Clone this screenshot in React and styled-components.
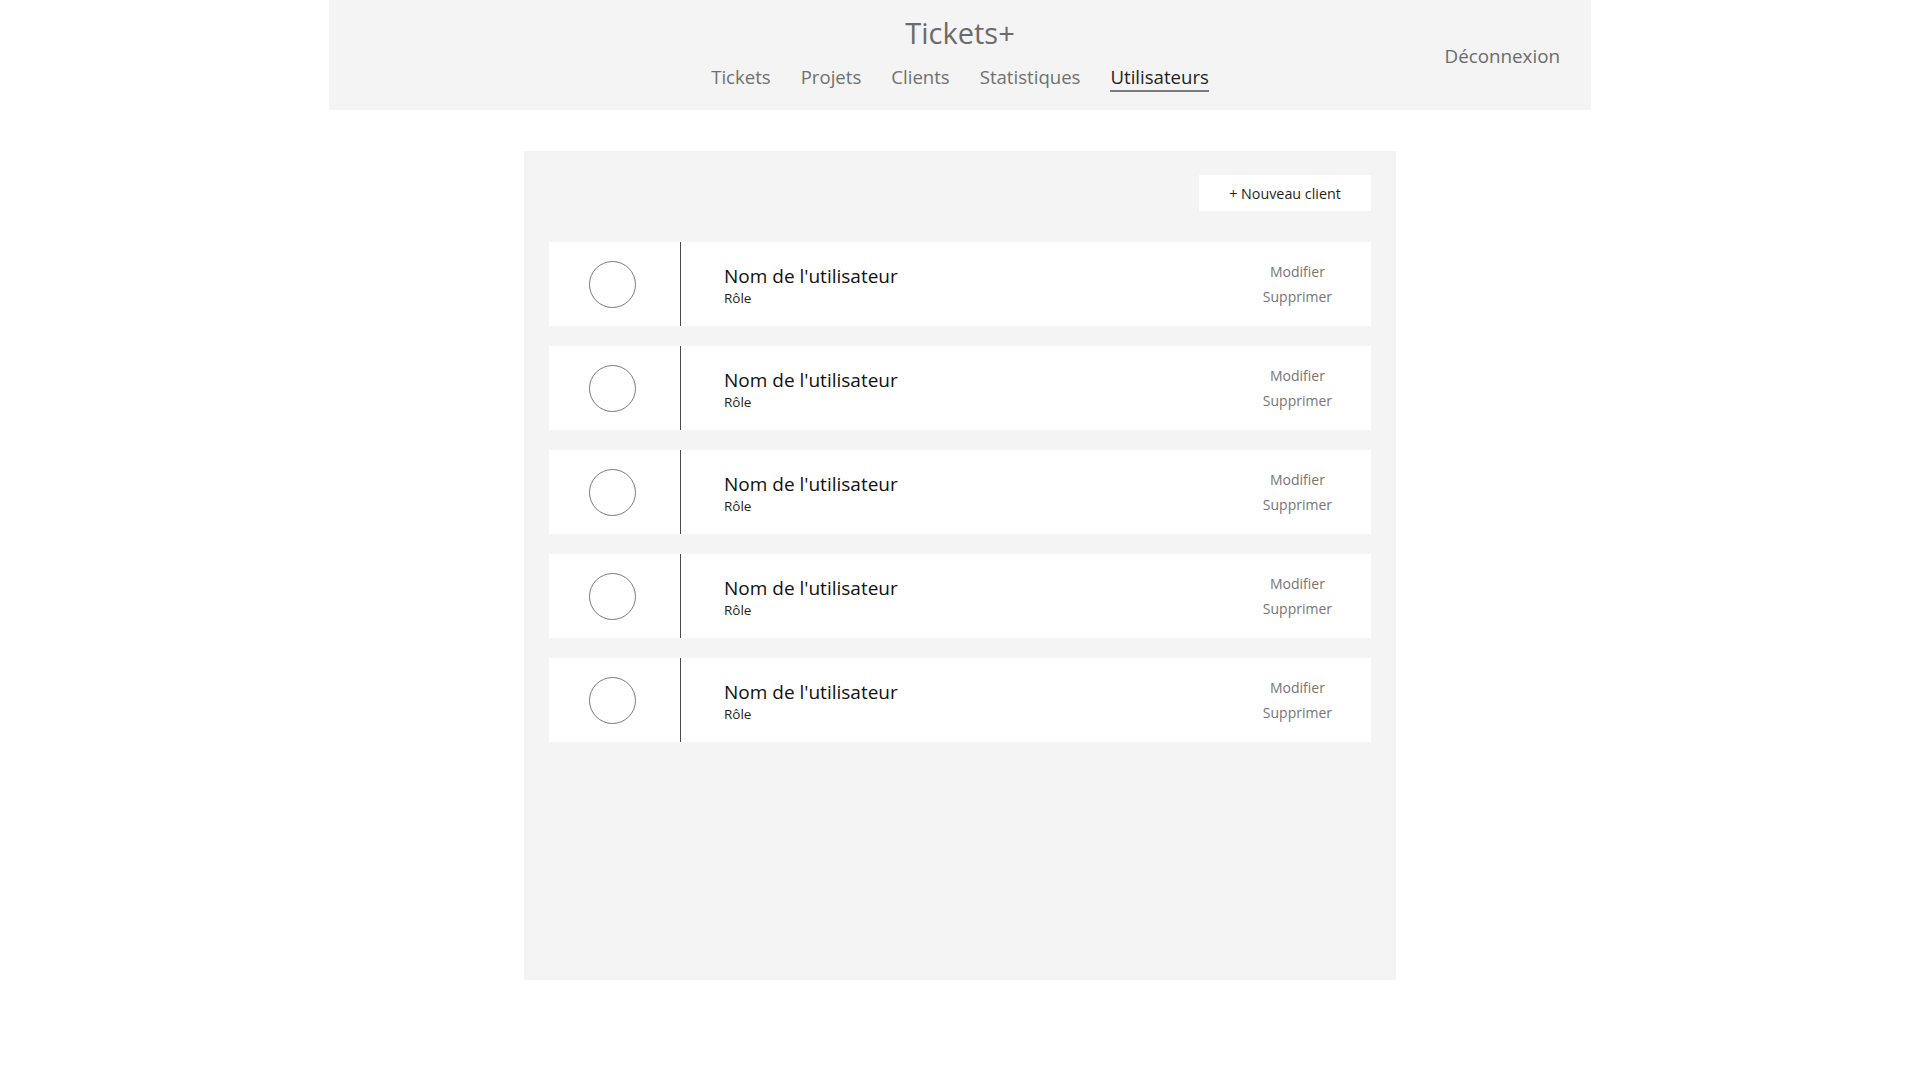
import React from 'react';
import styled, { createGlobalStyle } from 'styled-components';

const GlobalStyle = createGlobalStyle`
  body {
    margin: 0;
    background: #ffffff;
    font-family: 'Open Sans', 'Noto Sans', sans-serif;
  }
`;

// En-tête gris centré
const Header = styled.header`
  width: 1262px;
  height: 110px;
  margin: 0 auto;
  background-color: #f4f4f4;
  display: grid;
  grid-template-columns: 1fr auto 1fr;
  align-items: center;
  box-sizing: border-box;
`;

const Brand = styled.div`
  grid-column: 2;
  display: flex;
  flex-direction: column;
  align-items: center;
  align-self: start;
`;

const Title = styled.h1`
  margin: 13px 0 0;
  font-size: 29px;
  font-weight: 400;
  line-height: 40px;
  color: #6b6b6b;
`;

const Nav = styled.nav`
  display: flex;
  gap: 30px;
  margin-top: 11px;
`;

const NavItem = styled.a`
  font-size: 18.6px;
  line-height: 26px;
  color: ${(p) => (p.$active ? '#1f1f1f' : '#707070')};
  text-decoration: none;
  border-bottom: 2px solid ${(p) => (p.$active ? '#7a7a7a' : 'transparent')};
  cursor: pointer;
`;

const Logout = styled.a`
  grid-column: 3;
  justify-self: end;
  margin-right: 31px;
  margin-top: 2px;
  font-size: 18.8px;
  color: #6b6b6b;
  cursor: pointer;
`;

// Panneau principal
const Panel = styled.main`
  width: 872px;
  min-height: 829px;
  margin: 41px auto 0;
  padding: 24px 25px;
  box-sizing: border-box;
  background-color: #f4f4f4;
  display: flex;
  flex-direction: column;
`;

const Toolbar = styled.div`
  display: flex;
  justify-content: flex-end;
  margin-bottom: 31px;
`;

const NewButton = styled.button`
  width: 172px;
  height: 36px;
  border: none;
  background: #ffffff;
  font-family: inherit;
  font-size: 14.3px;
  color: #1f1f1f;
  cursor: pointer;
`;

const List = styled.div`
  display: flex;
  flex-direction: column;
  gap: 20px;
`;

const Card = styled.div`
  height: 84px;
  background: #ffffff;
  display: flex;
  align-items: stretch;
`;

const AvatarCell = styled.div`
  width: 131px;
  border-right: 1px solid #4a4a4a;
  display: flex;
  align-items: center;
  justify-content: center;
`;

const Avatar = styled.div`
  width: 47px;
  height: 47px;
  border-radius: 50%;
  border: 1px solid #7a7a7a;
  box-sizing: border-box;
  margin-right: 5px;
`;

const Info = styled.div`
  flex: 1;
  display: flex;
  flex-direction: column;
  justify-content: center;
  padding-left: 43px;
  padding-top: 2px;
`;

const Name = styled.div`
  font-size: 19px;
  line-height: 26px;
  color: #111111;
`;

const Role = styled.div`
  font-size: 13.5px;
  line-height: 18px;
  color: #1f1f1f;
`;

const Actions = styled.div`
  display: flex;
  flex-direction: column;
  align-items: center;
  justify-content: center;
  margin-right: 39px;
`;

const Action = styled.a`
  font-size: 14px;
  line-height: 25px;
  color: #767676;
  cursor: pointer;
`;

const navItems = ['Tickets', 'Projets', 'Clients', 'Statistiques', 'Utilisateurs'];
const users = [1, 2, 3, 4, 5];

const App = () => {
  return (
    <>
      <GlobalStyle />
      <Header>
        <Brand>
          <Title>Tickets+</Title>
          <Nav>
            {navItems.map((item) => (
              <NavItem key={item} $active={item === 'Utilisateurs'}>
                {item}
              </NavItem>
            ))}
          </Nav>
        </Brand>
        <Logout>Déconnexion</Logout>
      </Header>
      <Panel>
        <Toolbar>
          <NewButton>+ Nouveau client</NewButton>
        </Toolbar>
        <List>
          {users.map((id) => (
            <Card key={id}>
              <AvatarCell>
                <Avatar />
              </AvatarCell>
              <Info>
                <Name>Nom de l'utilisateur</Name>
                <Role>Rôle</Role>
              </Info>
              <Actions>
                <Action>Modifier</Action>
                <Action>Supprimer</Action>
              </Actions>
            </Card>
          ))}
        </List>
      </Panel>
    </>
  );
};

export default App;
